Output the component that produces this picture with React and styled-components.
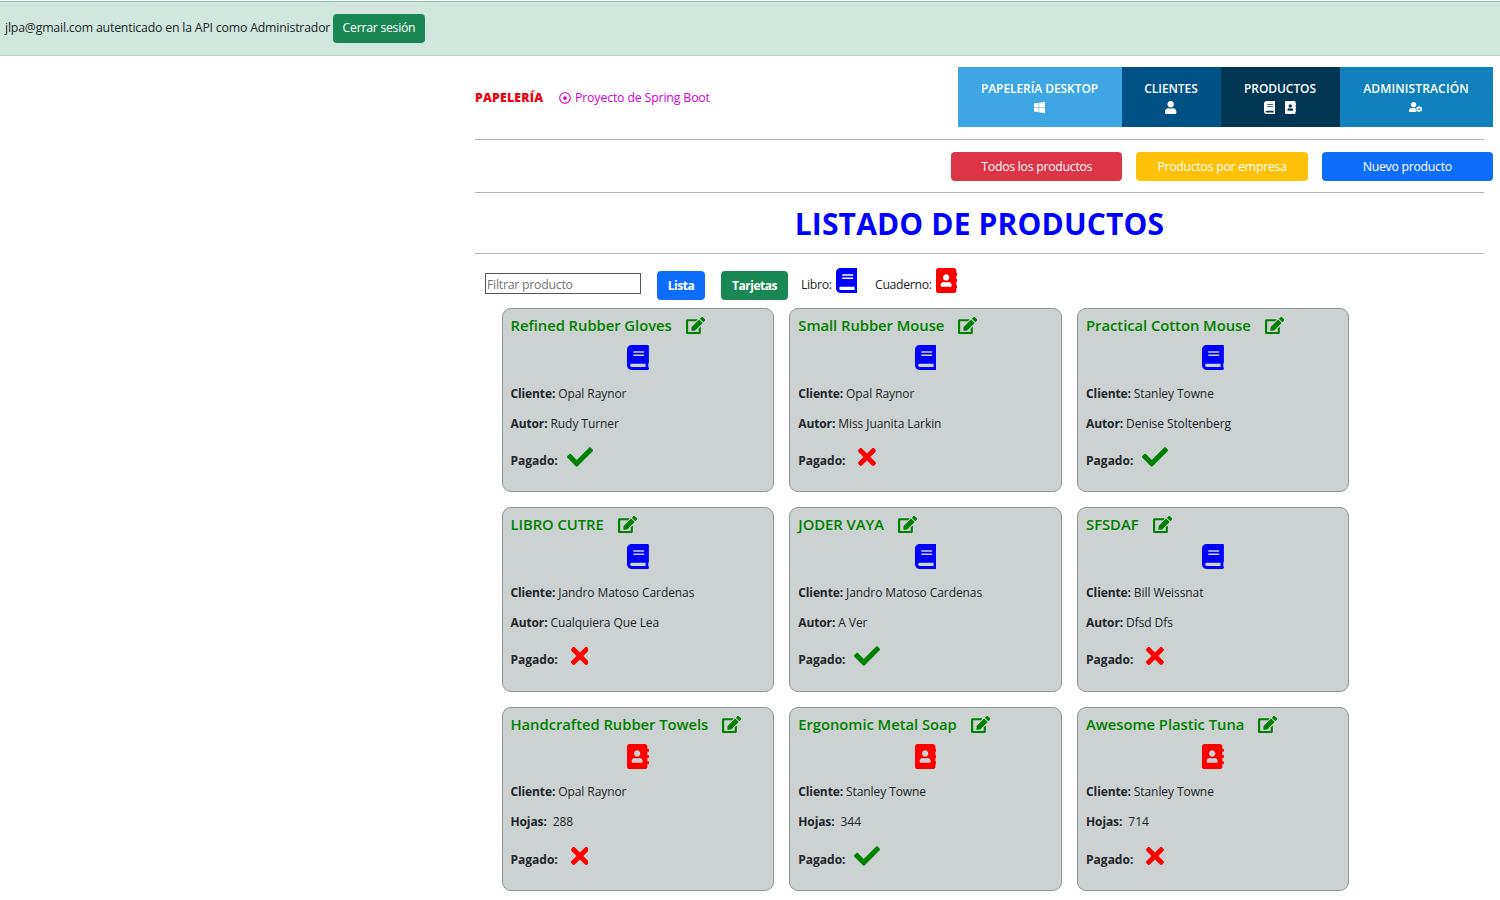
import React from 'react';
import styled, { createGlobalStyle } from 'styled-components';
import {
  FaAddressBook,
  FaBook,
  FaCheck,
  FaEdit,
  FaRegDotCircle,
  FaTimes,
  FaUser,
  FaUserCog,
  FaWindows,
} from 'react-icons/fa';

const GlobalStyle = createGlobalStyle`
  * { box-sizing: border-box; }
  body {
    margin: 0;
    background: #fff;
    color: #212529;
    font: 12.3px/18px "Open Sans", "Noto Sans", sans-serif;
    letter-spacing: -0.2px;
    overflow: hidden;
  }
  svg { display: block; flex: none; }
`;

const Page = styled.div`
  height: 900px;
  padding-top: 1px;
  overflow: hidden;
`;

const SessionBar = styled.div`
  display: flex;
  align-items: center;
  gap: 3px;
  height: 55px;
  padding: 0 0 1px 5px;
  background: #d1e7dd;
  border-top: 1px solid #8fc4ab;
  border-bottom: 1px solid #b4d8c7;
`;

const SessionText = styled.span`
  width: 325px;
  letter-spacing: -0.19px;
  white-space: nowrap;
`;

const Button = styled.button`
  width: ${(p) => p.$width}px;
  height: 29px;
  padding: 0;
  border: 0;
  border-radius: 4px;
  background: ${(p) => p.$color};
  color: #fff;
  font-family: inherit;
  font-size: ${(p) => (p.$bold ? 12 : 12.3)}px;
  font-weight: ${(p) => (p.$bold ? 700 : 400)};
  letter-spacing: ${(p) => (p.$bold ? -0.5 : -0.28)}px;
  line-height: 18px;
  white-space: nowrap;
  ${(p) => p.$bold && 'padding-top: 2px;'}
`;

const Content = styled.main`
  margin-left: 475px;
  padding-right: 7px;
`;

const Rule = styled.hr`
  height: 1px;
  margin: 0 9px 0 0;
  border: 0;
  background: #b2b4b6;
`;

const Header = styled.header`
  display: flex;
  align-items: center;
  height: 83px;
`;

const Brand = styled.strong`
  width: 84px;
  color: #f0000f;
  font-size: 12.3px;
  font-weight: 800;
  letter-spacing: 0.2px;
`;

const Project = styled.span`
  display: flex;
  align-items: center;
  gap: 4px;
  color: #d400d4;
  letter-spacing: -0.15px;
`;

const Nav = styled.nav`
  display: flex;
  margin: 0 0 1px auto;
`;

const NavItem = styled.a`
  display: flex;
  flex-direction: column;
  align-items: center;
  width: ${(p) => p.$width}px;
  height: 60px;
  padding: 13px 1px 0 0;
  background: ${(p) => p.$color};
  color: #fff;
  font-size: 12px;
  font-weight: 600;
  letter-spacing: ${(p) => p.$tracking || -0.07}px;
`;

const NavIcons = styled.span`
  display: flex;
  align-items: center;
  gap: 10px;
  height: 18px;
`;

const Actions = styled.div`
  display: flex;
  justify-content: flex-end;
  gap: 14px;
  height: 52px;
  padding-top: 12px;
`;

const Title = styled.h1`
  margin: 0 9px 0 0;
  padding: 1px 0 0;
  height: 60px;
  color: #0000ff;
  font-size: 30px;
  font-weight: 700;
  line-height: 60px;
  letter-spacing: 0.15px;
  text-align: center;
`;

const Toolbar = styled.div`
  display: flex;
  align-items: center;
  height: 54px;
  padding: 8px 0 0 10px;
`;

const Filter = styled.input`
  width: 156px;
  height: 21px;
  margin: -3px 16px 0 0;
  padding: 1px 1px 0;
  border: 1px solid #555;
  border-radius: 0;
  background: #fff;
  font: inherit;
  letter-spacing: -0.25px;
  &::placeholder { color: #757575; opacity: 1; }
`;

const Modes = styled.div`
  display: flex;
  gap: 16px;
  margin-right: 13px;
`;

const Legend = styled.div`
  display: flex;
  align-items: center;
  gap: 4px;
  width: ${(p) => p.$width}px;
  letter-spacing: -0.35px;
  svg { margin-top: -9px; }
`;

const Cards = styled.section`
  display: grid;
  grid-template-columns: repeat(3, 272.4px);
  grid-auto-rows: 184.4px;
  gap: 15px 15.4px;
  padding-left: 26.5px;
`;

const Card = styled.article`
  padding: 1px 8px 0;
  border: 1px solid #8e9697;
  border-radius: 9px;
  background: #ccd1d1;
`;

const CardTitle = styled.h2`
  display: flex;
  align-items: center;
  gap: 14px;
  height: 31px;
  padding-bottom: 1px;
  margin: 0;
  color: #008000;
  font-size: 14.8px;
  font-weight: 600;
  letter-spacing: -0.04px;
  white-space: nowrap;
  svg { margin-top: 1px; }
`;

const Kind = styled.div`
  display: flex;
  justify-content: center;
  margin: 4px 0 14.6px;
`;

const Field = styled.p`
  margin: 0 0 12px;
  font-size: 12px;
  letter-spacing: -0.08px;
  white-space: pre;
`;

const Label = styled.b`
  letter-spacing: -0.12px;
`;

const Paid = styled.div`
  display: flex;
  align-items: center;
  height: 34px;
  margin-top: -3px;
  font-size: 12px;
  b { width: ${(p) => (p.$paid ? 56 : 60)}px; padding-top: 5px; letter-spacing: 0; }
  svg { margin-top: -3px; }
`;

/* Solid icon whose width follows from its glyph's own proportions. */
const icon = (Shape, ratio) => ({ size, color }) => (
  <Shape color={color} style={{ width: size * ratio, height: size }} />
);
const Book = icon(FaBook, 0.875);
const Notebook = icon(FaAddressBook, 0.875);
const Edit = icon(FaEdit, 1.125);
const Person = icon(FaUser, 0.875);
const PersonCog = icon(FaUserCog, 1.25);
const Windows = icon(FaWindows, 0.875);
const Cross = icon(FaTimes, 0.6875);
const Check = icon(FaCheck, 1);

const products = [
  { name: 'Refined Rubber Gloves', client: 'Opal Raynor', author: 'Rudy Turner', paid: true },
  { name: 'Small Rubber Mouse', client: 'Opal Raynor', author: 'Miss Juanita Larkin', paid: false },
  { name: 'Practical Cotton Mouse', client: 'Stanley Towne', author: 'Denise Stoltenberg', paid: true },
  { name: 'LIBRO CUTRE', client: 'Jandro Matoso Cardenas', author: 'Cualquiera Que Lea', paid: false },
  { name: 'JODER VAYA', client: 'Jandro Matoso Cardenas', author: 'A Ver', paid: true },
  { name: 'SFSDAF', client: 'Bill Weissnat', author: 'Dfsd Dfs', paid: false },
  { name: 'Handcrafted Rubber Towels', client: 'Opal Raynor', sheets: 288, paid: false },
  { name: 'Ergonomic Metal Soap', client: 'Stanley Towne', sheets: 344, paid: true },
  { name: 'Awesome Plastic Tuna', client: 'Stanley Towne', sheets: 714, paid: false },
];

function ProductCard({ name, client, author, sheets, paid }) {
  return (
    <Card>
      <CardTitle>
        {name}
        <Edit size={17} color="#008000" />
      </CardTitle>
      <Kind>{author ? <Book size={25} color="#0000ff" /> : <Notebook size={25} color="#ff0000" />}</Kind>
      <Field><Label>Cliente:</Label> {client}</Field>
      {author ? (
        <Field><Label>Autor:</Label> {author}</Field>
      ) : (
        <Field><Label>Hojas:</Label>{'  '}{sheets}</Field>
      )}
      <Paid $paid={paid}>
        <b>Pagado:</b>
        {paid ? <Check size={26} color="#008000" /> : <Cross size={26} color="#ff0000" />}
      </Paid>
    </Card>
  );
}

export default function App() {
  return (
    <Page>
      <GlobalStyle />
      <SessionBar>
        <SessionText>jlpa@gmail.com autenticado en la API como Administrador</SessionText>
        <Button $width={92} $color="#198754">Cerrar sesión</Button>
      </SessionBar>
      <Content>
        <Header>
          <Brand>PAPELERÍA</Brand>
          <Project><FaRegDotCircle size={12} />Proyecto de Spring Boot</Project>
          <Nav>
            <NavItem $width={164} $color="#3ea6e2">
              PAPELERÍA DESKTOP
              <NavIcons><Windows size={13} /></NavIcons>
            </NavItem>
            <NavItem $width={99} $color="#005284">
              CLIENTES
              <NavIcons><Person size={13} /></NavIcons>
            </NavItem>
            <NavItem $width={119} $color="#003554">
              PRODUCTOS
              <NavIcons><Book size={13} /><Notebook size={13} /></NavIcons>
            </NavItem>
            <NavItem $width={153} $color="#1181bd" $tracking={0.15}>
              ADMINISTRACIÓN
              <NavIcons><PersonCog size={10.5} /></NavIcons>
            </NavItem>
          </Nav>
        </Header>
        <Rule />
        <Actions>
          <Button $width={171.3} $color="#dc3545">Todos los productos</Button>
          <Button $width={171.3} $color="#ffc107">Productos por empresa</Button>
          <Button $width={171.3} $color="#0d6efd">Nuevo producto</Button>
        </Actions>
        <Rule />
        <Title>LISTADO DE PRODUCTOS</Title>
        <Rule />
        <Toolbar>
          <Filter placeholder="Filtrar producto" />
          <Modes>
            <Button $width={48} $color="#0d6efd" $bold>Lista</Button>
            <Button $width={67} $color="#198754" $bold>Tarjetas</Button>
          </Modes>
          <Legend $width={74}>Libro:<Book size={25} color="#0000ff" /></Legend>
          <Legend $width={90}>Cuaderno:<Notebook size={25} color="#ff0000" /></Legend>
        </Toolbar>
        <Cards>
          {products.map((p) => <ProductCard key={p.name} {...p} />)}
        </Cards>
      </Content>
    </Page>
  );
}
